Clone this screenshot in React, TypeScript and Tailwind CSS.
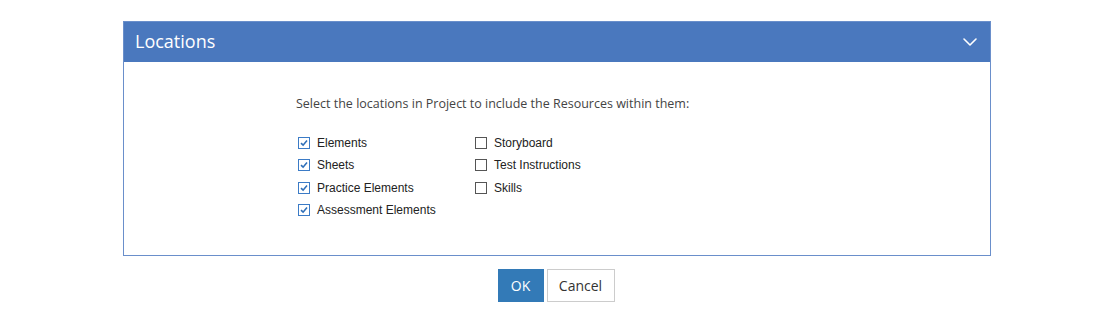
import { ChevronDown } from 'lucide-react';

type Item = { label: string; checked: boolean };

const left: Item[] = [
    { label: 'Elements', checked: true },
    { label: 'Sheets', checked: true },
    { label: 'Practice Elements', checked: true },
    { label: 'Assessment Elements', checked: true },
];

const right: Item[] = [
    { label: 'Storyboard', checked: false },
    { label: 'Test Instructions', checked: false },
    { label: 'Skills', checked: false },
];

function Check({ item }: { item: Item }) {
    return (
        <label className="flex items-center h-[22.4px] gap-[7px] text-[12px] text-[#222]" style={{ fontFamily: '"Liberation Sans", Arial, sans-serif' }}>
            <span
                className={
                    'flex items-center justify-center w-[12px] h-[12px] border bg-white ' +
                    (item.checked ? 'border-[#3b7bc6]' : 'border-[#555]')
                }
            >
                {item.checked && (
                    <svg width="8" height="8" viewBox="0 0 8 8">
                        <path d="M1 4.2 L3.1 6.2 L7 1.6" fill="none" stroke="#2f6fb8" strokeWidth="1.6" />
                    </svg>
                )}
            </span>
            <span>{item.label}</span>
        </label>
    );
}

export default function App() {
    return (
        <div className="w-[1120px] h-[318px] bg-white pt-[21px]" style={{ fontFamily: '"Open Sans", sans-serif' }}>
            <div className="ml-[123px] w-[868px] border border-[#6a8fcb]">
                {/* Header */}
                <div className="flex items-center justify-between h-[40px] bg-[#4a78be] pl-[11px] pr-[8px]">
                    <h2 className="text-[18px] text-white -mt-[1px]">Locations</h2>
                    <ChevronDown className="w-[24px] h-[24px] text-white" strokeWidth={1.6} />
                </div>

                {/* Body */}
                <div className="h-[193px] pl-[172px] pt-[33px]">
                    <p className="text-[12.5px] text-[#444]">Select the locations in Project to include the Resources within them:</p>
                    <div className="flex mt-[18px] pl-[2px]">
                        <div className="w-[177px] flex flex-col">
                            {left.map((i) => (
                                <Check key={i.label} item={i} />
                            ))}
                        </div>
                        <div className="flex flex-col">
                            {right.map((i) => (
                                <Check key={i.label} item={i} />
                            ))}
                        </div>
                    </div>
                </div>
            </div>

            {/* Actions */}
            <div className="flex justify-center gap-[3px] mt-[13px] ml-[122px] w-[868px]">
                <button className="w-[46px] h-[33px] bg-[#337ab7] text-white text-[14px]">OK</button>
                <button className="w-[68px] h-[33px] border border-[#ccc] bg-white text-[#333] text-[14px]">Cancel</button>
            </div>
        </div>
    );
}
